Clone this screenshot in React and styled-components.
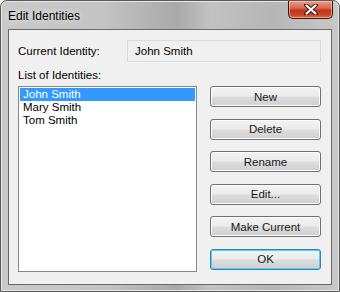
import React, {useState} from "react";
import styled, {createGlobalStyle} from "styled-components";

const GlobalStyle = createGlobalStyle`
 html, body {
  margin: 0;
  padding: 0;
  background: #ffffff;
 }
 body {
  font-family: "Liberation Sans", Arial, sans-serif;
  font-size: 11.5px;
 }
`;

const identities = ["John Smith", "Mary Smith", "Tom Smith"];
const actions = ["New", "Delete", "Rename", "Edit...", "Make Current", "OK"];

const Window = styled.div`
 width: 340px;
 height: 292px;
 box-sizing: border-box;
 display: flex;
 flex-direction: column;
 border: 1px solid #5a5a5a;
 border-radius: 7px 7px 0 0;
 background: linear-gradient(
  90deg,
  #c9c9c9 0%,
  #c4c4c4 30%,
  #a9a9a9 52%,
  #c2c2c2 62%,
  #b6b6b6 80%,
  #c8c8c8 100%
 );
 box-shadow: inset 0 0 0 1px #e6e6e6;
 overflow: hidden;
`;

const TitleBar = styled.div`
 height: 28px;
 display: flex;
 justify-content: space-between;
 align-items: flex-start;
 padding: 0 6px 0 7px;
`;

const Title = styled.span`
 margin-top: 8px;
 font-size: 12px;
 color: #000000;
 text-shadow: 0 0 6px rgba(255, 255, 255, 0.9);
`;

const CloseButton = styled.div`
 width: 45px;
 height: 18px;
 box-sizing: border-box;
 border: 1px solid #3c1a14;
 border-top: none;
 border-radius: 0 0 5px 5px;
 background: linear-gradient(
  180deg,
  #e9a08c 0%,
  #d9694f 40%,
  #c2351a 55%,
  #c94428 80%,
  #dc6a46 100%
 );
 box-shadow: inset 0 0 0 1px rgba(255, 210, 195, 0.55);
 display: flex;
 align-items: center;
 justify-content: center;
`;

const Client = styled.div`
 flex: 1;
 margin: 0 7px 6px 7px;
 border: 1px solid #6a6a6a;
 background: #f0f0f0;
 padding: 10px 10px 12px 9px;
 display: flex;
 flex-direction: column;
`;

const Row = styled.div`
 display: flex;
 align-items: center;
 justify-content: space-between;
`;

const Label = styled.span`
 color: #000000;
 line-height: 14px;
`;

const ReadOnlyBox = styled.div`
 width: 194px;
 height: 22px;
 box-sizing: border-box;
 border: 1px solid #dadada;
 background: #f0f0f0;
 padding: 0 0 0 7px;
 display: flex;
 align-items: center;
`;

const ListLabel = styled(Label)`
 margin-top: 6px;
`;

const Body = styled.div`
 flex: 1;
 display: flex;
 justify-content: space-between;
 margin-top: 4px;
`;

const ListBox = styled.div`
 width: 179px;
 box-sizing: border-box;
 border: 1px solid #828790;
 background: #ffffff;
 padding: 1px;
 display: flex;
 flex-direction: column;
`;

const ListItem = styled.div`
 height: 13px;
 line-height: 13px;
 padding-left: 3px;
 background: ${({$selected}) => ($selected ? "#3399ff" : "transparent")};
 color: ${({$selected}) => ($selected ? "#ffffff" : "#000000")};
`;

const ButtonColumn = styled.div`
 display: flex;
 flex-direction: column;
 gap: 11.6px;
`;

const Button = styled.div`
 width: 111px;
 height: 21px;
 box-sizing: border-box;
 border: 1px solid ${({$isDefault}) => ($isDefault ? "#3c7fb1" : "#707070")};
 border-radius: 3px;
 background: linear-gradient(
  180deg,
  #f2f2f2 0%,
  #ebebeb 48%,
  #dddddd 52%,
  #cfcfcf 100%
 );
 box-shadow: inset 0 0 0 1px
  ${({$isDefault}) => ($isDefault ? "#48d2fc" : "#fcfcfc")};
 display: flex;
 align-items: center;
 justify-content: center;
 color: #1a1a1a;
 font-weight: 400;
`;

const CloseIcon = () => (
 <svg width='14' height='11' viewBox='0 0 14 11'>
  <path
   d='M2 1 L12 10 M12 1 L2 10'
   stroke='#3d1c16'
   strokeWidth='4'
   strokeLinecap='round'
  />
  <path
   d='M2.5 1.5 L11.5 9.5 M11.5 1.5 L2.5 9.5'
   stroke='#ffffff'
   strokeWidth='2.2'
   strokeLinecap='round'
  />
 </svg>
);

const App = () => {
 const [selected, setSelected] = useState(0);

 return (
  <>
   <GlobalStyle />
   <Window>
    <TitleBar>
     <Title>Edit Identities</Title>
     <CloseButton>
      <CloseIcon />
     </CloseButton>
    </TitleBar>

    <Client>
     <Row>
      <Label>Current Identity:</Label>
      <ReadOnlyBox>{identities[0]}</ReadOnlyBox>
     </Row>

     <ListLabel>List of Identities:</ListLabel>

     <Body>
      <ListBox>
       {identities.map((name, index) => (
        <ListItem
         key={name}
         $selected={selected === index}
         onClick={() => setSelected(index)}
        >
         {name}
        </ListItem>
       ))}
      </ListBox>

      <ButtonColumn>
       {actions.map(action => (
        <Button key={action} $isDefault={action === "OK"}>
         {action}
        </Button>
       ))}
      </ButtonColumn>
     </Body>
    </Client>
   </Window>
  </>
 );
};

export default App;
